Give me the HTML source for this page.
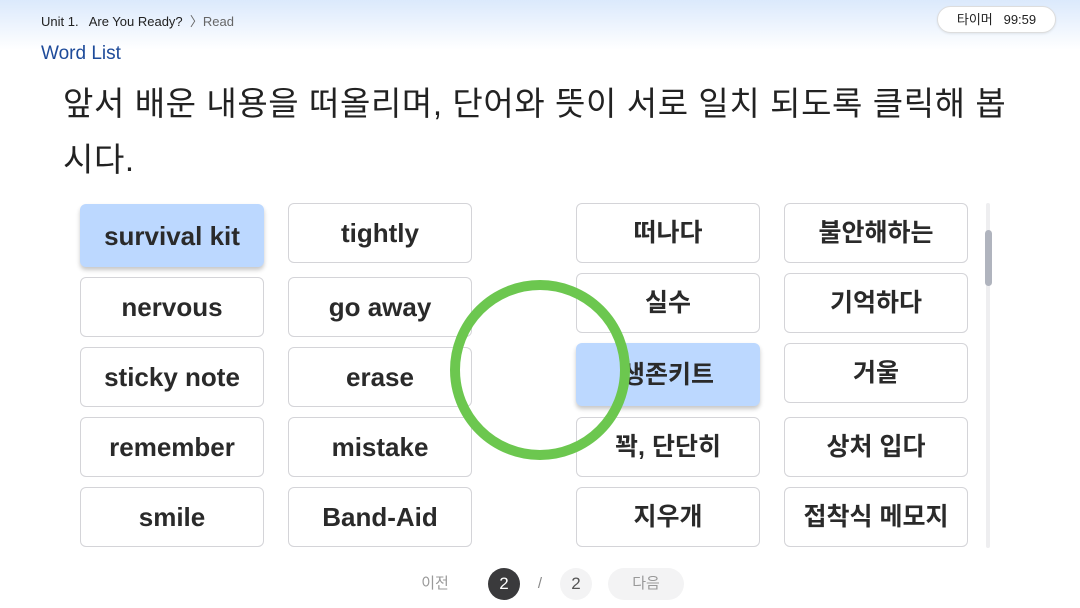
<!DOCTYPE html>
<html><head><meta charset="utf-8"><style>
*{margin:0;padding:0;box-sizing:border-box}
body{width:1080px;height:608px;overflow:hidden;background:#fff;font-family:"Liberation Sans","Noto Sans CJK KR",sans-serif;color:#222;position:relative}
.hdr{position:absolute;left:0;top:0;width:1080px;height:50px;background:linear-gradient(#dbe9fc,#fff)}
.bc{position:absolute;left:41px;top:11px;font-size:13px;color:#222}
.bc span{color:#666}
.timer{position:absolute;left:937px;top:6px;width:119px;height:27px;border:1px solid #ddd;border-radius:14px;background:#fff;font-size:13px;line-height:25px;text-align:center;box-shadow:0 1px 2px rgba(0,0,0,.08)}
.wl{position:absolute;left:41px;top:43px;font-size:19px;color:#1e4b9a}
.q{position:absolute;left:63px;top:76px;width:1000px;font-size:33px;line-height:56px;color:#222;letter-spacing:0.6px}
.b{position:absolute;width:184px;height:60px;border:1px solid #d4d4d8;border-radius:6px;background:#fff;font-size:26px;font-weight:bold;text-align:center;line-height:58px;color:#2a2a2a}
.b.k{font-size:25px}
.s{background:#bcd8ff;border-color:#bcd8ff;box-shadow:0 3px 4px rgba(0,0,0,.22);height:63px;line-height:63px}
.track{position:absolute;left:986px;top:203px;width:4px;height:345px;background:#eeeef0;border-radius:2px}
.thumb{position:absolute;left:985px;top:230px;width:7px;height:56px;background:#b0b4be;border-radius:4px}
.pg{position:absolute;top:568px;font-size:15px;line-height:32px;color:#999;text-align:center}
</style></head><body>
<div class="hdr"></div>
<div class="bc">Unit 1.&nbsp;&nbsp; Are You Ready?&nbsp;&nbsp;<span>〉Read</span></div>
<div class="timer">타이머&nbsp;&nbsp; 99:59</div>
<div class="wl">Word List</div>
<div class="q">앞서 배운 내용을 떠올리며, 단어와 뜻이 서로 일치 되도록 클릭해 봅<br>시다.</div>

<div class="b s" style="left:80px;top:204px">survival kit</div>
<div class="b" style="left:288px;top:203px">tightly</div>
<div class="b" style="left:80px;top:277px">nervous</div>
<div class="b" style="left:288px;top:277px">go away</div>
<div class="b" style="left:80px;top:347px">sticky note</div>
<div class="b" style="left:288px;top:347px">erase</div>
<div class="b" style="left:80px;top:417px">remember</div>
<div class="b" style="left:288px;top:417px">mistake</div>
<div class="b" style="left:80px;top:487px">smile</div>
<div class="b" style="left:288px;top:487px">Band-Aid</div>

<div class="b k" style="left:576px;top:203px">떠나다</div>
<div class="b k" style="left:784px;top:203px">불안해하는</div>
<div class="b k" style="left:576px;top:273px">실수</div>
<div class="b k" style="left:784px;top:273px">기억하다</div>
<div class="b k s" style="left:576px;top:343px">생존키트</div>
<div class="b k" style="left:784px;top:343px">거울</div>
<div class="b k" style="left:576px;top:417px">꽉, 단단히</div>
<div class="b k" style="left:784px;top:417px">상처 입다</div>
<div class="b k" style="left:576px;top:487px">지우개</div>
<div class="b k" style="left:784px;top:487px">접착식 메모지</div>

<svg style="position:absolute;left:0;top:0" width="1080" height="608"><circle cx="540" cy="370" r="85" fill="none" stroke="#6cc74f" stroke-width="10"/></svg>

<div class="track"></div><div class="thumb"></div>

<div class="pg" style="left:420px;width:30px">이전</div>
<div style="position:absolute;left:488px;top:568px;width:32px;height:32px;border-radius:16px;background:#3a3a3c;color:#fff;font-size:17px;line-height:32px;text-align:center">2</div>
<div class="pg" style="left:534px;width:12px;color:#888">/</div>
<div style="position:absolute;left:560px;top:568px;width:32px;height:32px;border-radius:16px;background:#f3f3f4;color:#555;font-size:17px;line-height:32px;text-align:center">2</div>
<div style="position:absolute;left:608px;top:568px;width:76px;height:32px;border-radius:16px;background:#f3f3f4;color:#999;font-size:15px;line-height:32px;text-align:center">다음</div>
</body></html>
